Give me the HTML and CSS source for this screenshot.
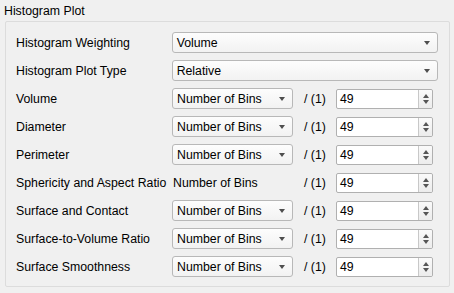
FILE: index.html
```html
<!DOCTYPE html>
<html>
<head>
<meta charset="utf-8">
<link rel="stylesheet" href="styles.css">
</head>
<body>
<div class="title">Histogram Plot</div>
<div class="group">
  <div class="row">
    <span class="label">Histogram Weighting</span>
    <div class="combo wide"><span>Volume</span><i class="arrow"></i></div>
  </div>
  <div class="row">
    <span class="label">Histogram Plot Type</span>
    <div class="combo wide"><span>Relative</span><i class="arrow"></i></div>
  </div>
  <div class="row">
    <span class="label">Volume</span>
    <div class="combo small"><span>Number of Bins</span><i class="arrow"></i></div>
    <span class="unit">/ (1)</span>
    <div class="spin"><span class="val">49</span><div class="btns"><i class="up"></i><i class="dn"></i></div></div>
  </div>
  <div class="row">
    <span class="label">Diameter</span>
    <div class="combo small"><span>Number of Bins</span><i class="arrow"></i></div>
    <span class="unit">/ (1)</span>
    <div class="spin"><span class="val">49</span><div class="btns"><i class="up"></i><i class="dn"></i></div></div>
  </div>
  <div class="row">
    <span class="label">Perimeter</span>
    <div class="combo small"><span>Number of Bins</span><i class="arrow"></i></div>
    <span class="unit">/ (1)</span>
    <div class="spin"><span class="val">49</span><div class="btns"><i class="up"></i><i class="dn"></i></div></div>
  </div>
  <div class="row">
    <span class="label">Sphericity and Aspect Ratio</span>
    <div class="plain small"><span>Number of Bins</span></div>
    <span class="unit">/ (1)</span>
    <div class="spin"><span class="val">49</span><div class="btns"><i class="up"></i><i class="dn"></i></div></div>
  </div>
  <div class="row">
    <span class="label">Surface and Contact</span>
    <div class="combo small"><span>Number of Bins</span><i class="arrow"></i></div>
    <span class="unit">/ (1)</span>
    <div class="spin"><span class="val">49</span><div class="btns"><i class="up"></i><i class="dn"></i></div></div>
  </div>
  <div class="row">
    <span class="label">Surface-to-Volume Ratio</span>
    <div class="combo small"><span>Number of Bins</span><i class="arrow"></i></div>
    <span class="unit">/ (1)</span>
    <div class="spin"><span class="val">49</span><div class="btns"><i class="up"></i><i class="dn"></i></div></div>
  </div>
  <div class="row">
    <span class="label">Surface Smoothness</span>
    <div class="combo small"><span>Number of Bins</span><i class="arrow"></i></div>
    <span class="unit">/ (1)</span>
    <div class="spin"><span class="val">49</span><div class="btns"><i class="up"></i><i class="dn"></i></div></div>
  </div>
</div>
</body>
</html>
```

FILE: styles.css
```css
html, body {
  margin: 0;
  padding: 0;
  background: #f0f0f0;
  font-family: "Liberation Sans", Arial, sans-serif;
  font-size: 12.3px;
  color: #000;
}
.title {
  height: 21px;
  line-height: 22px;
  padding-left: 4px;
}
.group {
  margin-left: 5px;
  width: 445px;
  height: 266px;
  box-sizing: border-box;
  border: 1px solid #dcdcdc;
  border-radius: 2px;
  padding: 10px 11px 0 10px;
  display: flex;
  flex-direction: column;
  gap: 7px;
}
.row {
  display: flex;
  align-items: center;
  height: 21px;
}
.label {
  width: 156px;
  white-space: nowrap;
}
.combo {
  box-sizing: border-box;
  height: 21px;
  border: 1px solid #b8b8b8;
  border-radius: 3px;
  background: linear-gradient(#fdfdfd, #f2f2f2);
  display: flex;
  align-items: center;
  padding-left: 4px;
  padding-right: 7px;
}
.combo span { flex: 1; }
.combo.wide { width: 267px; }
.combo.small { width: 121px; }
.plain { width: 121px; padding-left: 1px; box-sizing: border-box; }
.arrow {
  width: 0;
  height: 0;
  border-left: 3.5px solid transparent;
  border-right: 3.5px solid transparent;
  border-top: 4px solid #4e4e4e;
}
.unit {
  margin-left: 11px;
  width: 32px;
}
.spin {
  box-sizing: border-box;
  width: 97px;
  height: 20px;
  border: 1px solid #b0b0b0;
  border-radius: 2px;
  background: #fff;
  display: flex;
}
.val {
  flex: 1;
  padding-left: 3px;
  line-height: 18px;
}
.btns {
  width: 13px;
  border-left: 1px solid #c8c8c8;
  background: linear-gradient(#fafafa, #ececec);
  display: flex;
  flex-direction: column;
  align-items: center;
  justify-content: center;
  gap: 2px;
  border-radius: 0 2px 2px 0;
}
.up {
  width: 0; height: 0;
  border-left: 3px solid transparent;
  border-right: 3px solid transparent;
  border-bottom: 4px solid #555;
}
.dn {
  width: 0; height: 0;
  border-left: 3px solid transparent;
  border-right: 3px solid transparent;
  border-top: 4px solid #555;
}
```
